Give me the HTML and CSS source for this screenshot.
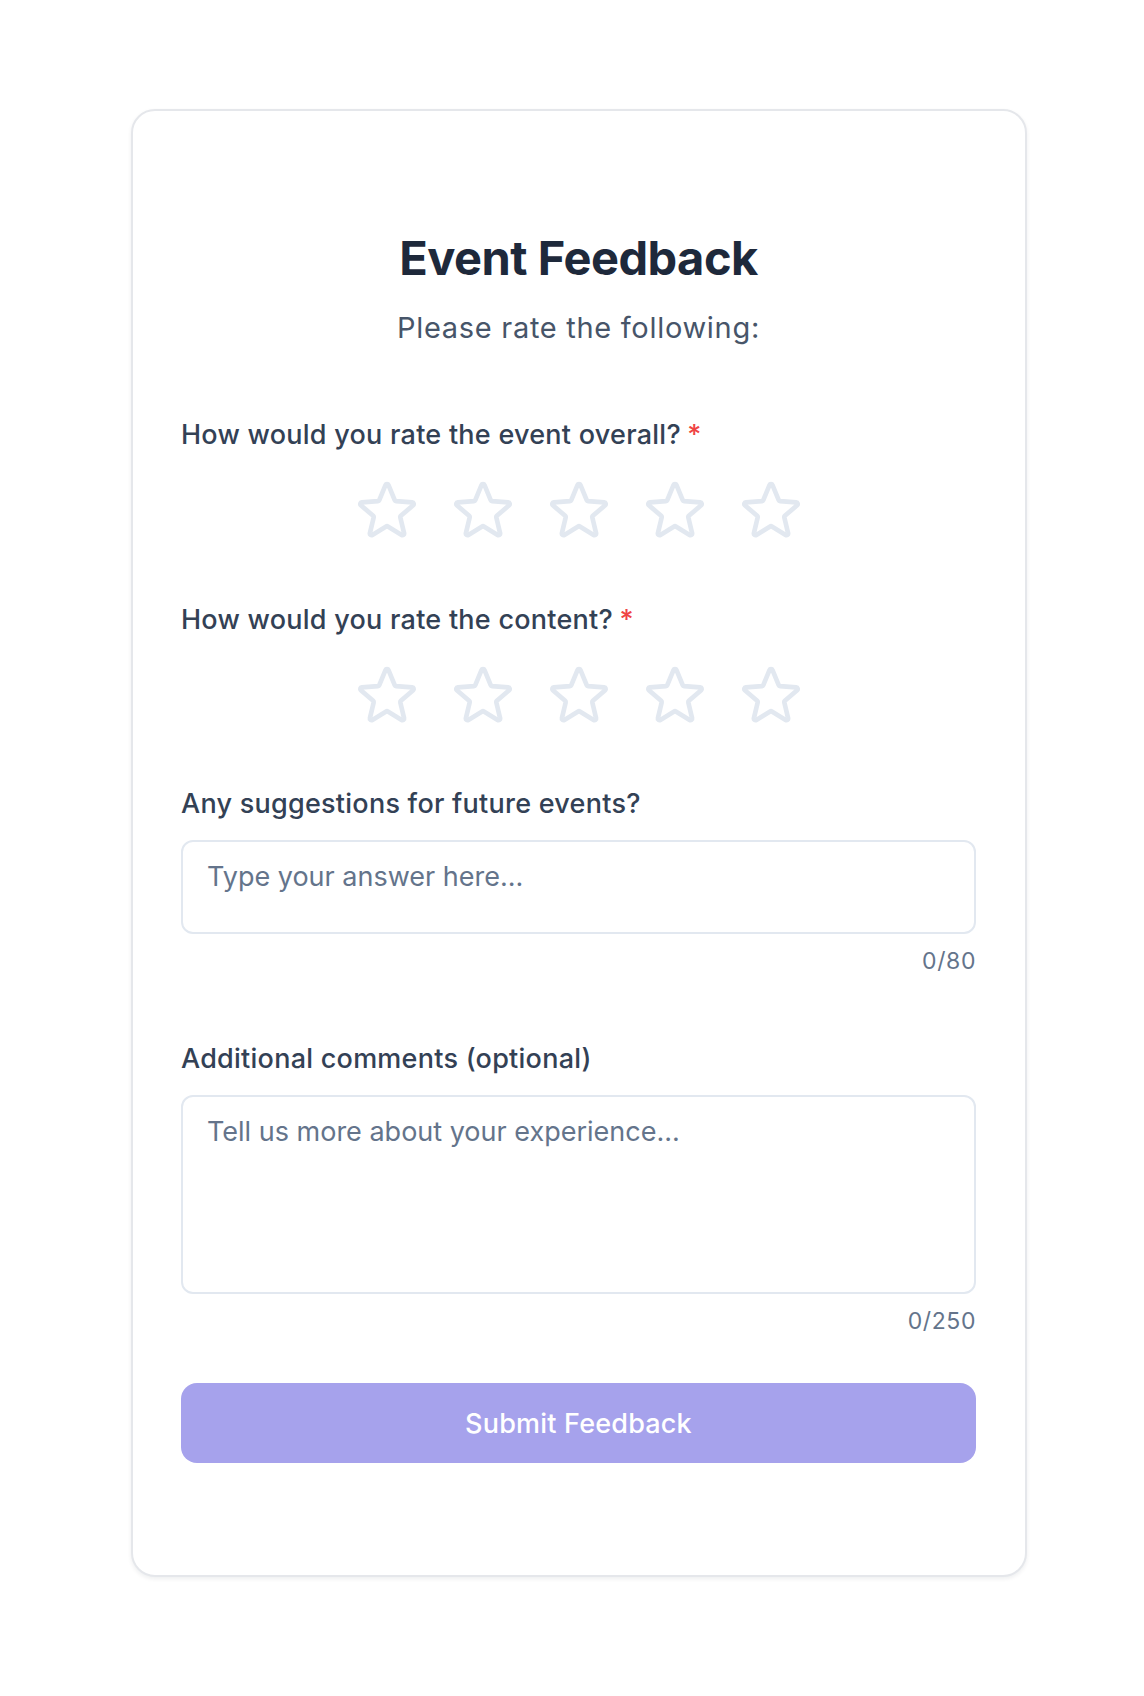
FILE: index.html
```html
<!DOCTYPE html>
<html lang="en">
<head>
<meta charset="utf-8">
<title>Event Feedback</title>
<link rel="stylesheet" href="styles.css">
</head>
<body>
<main class="page">
  <form class="card">
    <header class="card-header">
      <h1 class="title">Event Feedback</h1>
      <p class="subtitle">Please rate the following:</p>
    </header>

    <section class="field rating-field">
      <label class="label">How would you rate the event overall? <span class="req">*</span></label>
      <div class="stars">
        <svg class="star" viewBox="0 0 24 24" aria-hidden="true"><path d="M11.48 3.499a.562.562 0 0 1 1.040 0l2.125 5.111a.563.563 0 0 0 .475.345l5.518.442c.499.04.701.663.321.988l-4.204 3.602a.563.563 0 0 0-.182.557l1.285 5.385a.562.562 0 0 1-.84.61l-4.725-2.885a.562.562 0 0 0-.586 0L6.982 20.54a.562.562 0 0 1-.84-.61l1.285-5.386a.562.562 0 0 0-.182-.557l-4.204-3.602a.562.562 0 0 1 .321-.988l5.518-.442a.563.563 0 0 0 .475-.345L11.48 3.5Z"/></svg>
        <svg class="star" viewBox="0 0 24 24" aria-hidden="true"><path d="M11.48 3.499a.562.562 0 0 1 1.040 0l2.125 5.111a.563.563 0 0 0 .475.345l5.518.442c.499.04.701.663.321.988l-4.204 3.602a.563.563 0 0 0-.182.557l1.285 5.385a.562.562 0 0 1-.84.61l-4.725-2.885a.562.562 0 0 0-.586 0L6.982 20.54a.562.562 0 0 1-.84-.61l1.285-5.386a.562.562 0 0 0-.182-.557l-4.204-3.602a.562.562 0 0 1 .321-.988l5.518-.442a.563.563 0 0 0 .475-.345L11.48 3.5Z"/></svg>
        <svg class="star" viewBox="0 0 24 24" aria-hidden="true"><path d="M11.48 3.499a.562.562 0 0 1 1.040 0l2.125 5.111a.563.563 0 0 0 .475.345l5.518.442c.499.04.701.663.321.988l-4.204 3.602a.563.563 0 0 0-.182.557l1.285 5.385a.562.562 0 0 1-.84.61l-4.725-2.885a.562.562 0 0 0-.586 0L6.982 20.54a.562.562 0 0 1-.84-.61l1.285-5.386a.562.562 0 0 0-.182-.557l-4.204-3.602a.562.562 0 0 1 .321-.988l5.518-.442a.563.563 0 0 0 .475-.345L11.48 3.5Z"/></svg>
        <svg class="star" viewBox="0 0 24 24" aria-hidden="true"><path d="M11.48 3.499a.562.562 0 0 1 1.040 0l2.125 5.111a.563.563 0 0 0 .475.345l5.518.442c.499.04.701.663.321.988l-4.204 3.602a.563.563 0 0 0-.182.557l1.285 5.385a.562.562 0 0 1-.84.61l-4.725-2.885a.562.562 0 0 0-.586 0L6.982 20.54a.562.562 0 0 1-.84-.61l1.285-5.386a.562.562 0 0 0-.182-.557l-4.204-3.602a.562.562 0 0 1 .321-.988l5.518-.442a.563.563 0 0 0 .475-.345L11.48 3.5Z"/></svg>
        <svg class="star" viewBox="0 0 24 24" aria-hidden="true"><path d="M11.48 3.499a.562.562 0 0 1 1.040 0l2.125 5.111a.563.563 0 0 0 .475.345l5.518.442c.499.04.701.663.321.988l-4.204 3.602a.563.563 0 0 0-.182.557l1.285 5.385a.562.562 0 0 1-.84.61l-4.725-2.885a.562.562 0 0 0-.586 0L6.982 20.54a.562.562 0 0 1-.84-.61l1.285-5.386a.562.562 0 0 0-.182-.557l-4.204-3.602a.562.562 0 0 1 .321-.988l5.518-.442a.563.563 0 0 0 .475-.345L11.48 3.5Z"/></svg>
      </div>
    </section>

    <section class="field rating-field">
      <label class="label">How would you rate the content? <span class="req">*</span></label>
      <div class="stars">
        <svg class="star" viewBox="0 0 24 24" aria-hidden="true"><path d="M11.48 3.499a.562.562 0 0 1 1.040 0l2.125 5.111a.563.563 0 0 0 .475.345l5.518.442c.499.04.701.663.321.988l-4.204 3.602a.563.563 0 0 0-.182.557l1.285 5.385a.562.562 0 0 1-.84.61l-4.725-2.885a.562.562 0 0 0-.586 0L6.982 20.54a.562.562 0 0 1-.84-.61l1.285-5.386a.562.562 0 0 0-.182-.557l-4.204-3.602a.562.562 0 0 1 .321-.988l5.518-.442a.563.563 0 0 0 .475-.345L11.48 3.5Z"/></svg>
        <svg class="star" viewBox="0 0 24 24" aria-hidden="true"><path d="M11.48 3.499a.562.562 0 0 1 1.040 0l2.125 5.111a.563.563 0 0 0 .475.345l5.518.442c.499.04.701.663.321.988l-4.204 3.602a.563.563 0 0 0-.182.557l1.285 5.385a.562.562 0 0 1-.84.61l-4.725-2.885a.562.562 0 0 0-.586 0L6.982 20.54a.562.562 0 0 1-.84-.61l1.285-5.386a.562.562 0 0 0-.182-.557l-4.204-3.602a.562.562 0 0 1 .321-.988l5.518-.442a.563.563 0 0 0 .475-.345L11.48 3.5Z"/></svg>
        <svg class="star" viewBox="0 0 24 24" aria-hidden="true"><path d="M11.48 3.499a.562.562 0 0 1 1.040 0l2.125 5.111a.563.563 0 0 0 .475.345l5.518.442c.499.04.701.663.321.988l-4.204 3.602a.563.563 0 0 0-.182.557l1.285 5.385a.562.562 0 0 1-.84.61l-4.725-2.885a.562.562 0 0 0-.586 0L6.982 20.54a.562.562 0 0 1-.84-.61l1.285-5.386a.562.562 0 0 0-.182-.557l-4.204-3.602a.562.562 0 0 1 .321-.988l5.518-.442a.563.563 0 0 0 .475-.345L11.48 3.5Z"/></svg>
        <svg class="star" viewBox="0 0 24 24" aria-hidden="true"><path d="M11.48 3.499a.562.562 0 0 1 1.040 0l2.125 5.111a.563.563 0 0 0 .475.345l5.518.442c.499.04.701.663.321.988l-4.204 3.602a.563.563 0 0 0-.182.557l1.285 5.385a.562.562 0 0 1-.84.61l-4.725-2.885a.562.562 0 0 0-.586 0L6.982 20.54a.562.562 0 0 1-.84-.61l1.285-5.386a.562.562 0 0 0-.182-.557l-4.204-3.602a.562.562 0 0 1 .321-.988l5.518-.442a.563.563 0 0 0 .475-.345L11.48 3.5Z"/></svg>
        <svg class="star" viewBox="0 0 24 24" aria-hidden="true"><path d="M11.48 3.499a.562.562 0 0 1 1.040 0l2.125 5.111a.563.563 0 0 0 .475.345l5.518.442c.499.04.701.663.321.988l-4.204 3.602a.563.563 0 0 0-.182.557l1.285 5.385a.562.562 0 0 1-.84.61l-4.725-2.885a.562.562 0 0 0-.586 0L6.982 20.54a.562.562 0 0 1-.84-.61l1.285-5.386a.562.562 0 0 0-.182-.557l-4.204-3.602a.562.562 0 0 1 .321-.988l5.518-.442a.563.563 0 0 0 .475-.345L11.48 3.5Z"/></svg>
      </div>
    </section>

    <section class="field text-field">
      <label class="label" for="suggestions">Any suggestions for future events?</label>
      <textarea id="suggestions" class="input input-short" rows="2" placeholder="Type your answer here..."></textarea>
      <div class="counter">0/80</div>
    </section>

    <section class="field text-field">
      <label class="label" for="comments">Additional comments (optional)</label>
      <textarea id="comments" class="input input-tall" rows="4" placeholder="Tell us more about your experience..."></textarea>
      <div class="counter">0/250</div>
    </section>

    <button type="button" class="submit">Submit Feedback</button>
  </form>
</main>
</body>
</html>
```

FILE: styles.css
```css
* {
  box-sizing: border-box;
}

html, body {
  margin: 0;
  padding: 0;
  background: #ffffff;
}

body {
  font-family: "Inter", "Noto Sans", "Liberation Sans", sans-serif;
  color: #1e293b;
}

.page {
  padding: 109px 0 120px 131px;
}

.card {
  width: 896px;
  background: #ffffff;
  border: 2px solid #e5e7eb;
  border-radius: 24px;
  box-shadow: 0 2px 4px rgba(15, 23, 42, 0.07);
  padding: 119px 49px 112px 48px;
  display: flex;
  flex-direction: column;
}

.card-header {
  display: flex;
  flex-direction: column;
  align-items: center;
  text-align: center;
}

.title {
  margin: 0;
  font-size: 47px;
  line-height: 55px;
  font-weight: 700;
  letter-spacing: -0.5px;
  color: #1e293b;
}

.subtitle {
  margin: 25px 0 0 0;
  font-size: 29px;
  line-height: 36px;
  font-weight: 400;
  letter-spacing: 0.7px;
  color: #475569;
}

.field {
  display: flex;
  flex-direction: column;
}

.rating-field {
  margin-top: 71px;
}

.rating-field + .rating-field {
  margin-top: 57px;
}

.text-field {
  margin-top: 56px;
}

.text-field + .text-field {
  margin-top: 66px;
}

.label {
  font-size: 27px;
  line-height: 36px;
  font-weight: 500;
  letter-spacing: 0.25px;
  color: #334155;
}

.req {
  color: #ef4444;
  margin-left: -1px;
}

.stars {
  display: flex;
  justify-content: center;
  gap: 26px;
  margin-top: 22px;
}

.star {
  width: 70px;
  height: 70px;
  fill: none;
  stroke: #e2e8f0;
  stroke-width: 1.6;
  stroke-linejoin: round;
}

.input {
  display: block;
  width: 100%;
  margin-top: 18px;
  border: 2px solid #e2e8f0;
  border-radius: 12px;
  padding: 17px 24px;
  font-family: inherit;
  font-size: 27px;
  line-height: 36px;
  color: #334155;
  background: #ffffff;
  resize: none;
  outline: none;
}

.input::placeholder {
  color: #64748b;
}

.input-short {
  height: 94px;
}

.input-tall {
  height: 199px;
}

.counter {
  margin-top: 13px;
  text-align: right;
  font-size: 23px;
  line-height: 28px;
  letter-spacing: 0.6px;
  color: #64748b;
}

.submit {
  margin-top: 48px;
  height: 80px;
  width: 100%;
  border: none;
  border-radius: 16px;
  background: #a6a2ec;
  color: #ffffff;
  font-family: inherit;
  font-size: 27px;
  font-weight: 500;
  letter-spacing: 0.2px;
}
```
